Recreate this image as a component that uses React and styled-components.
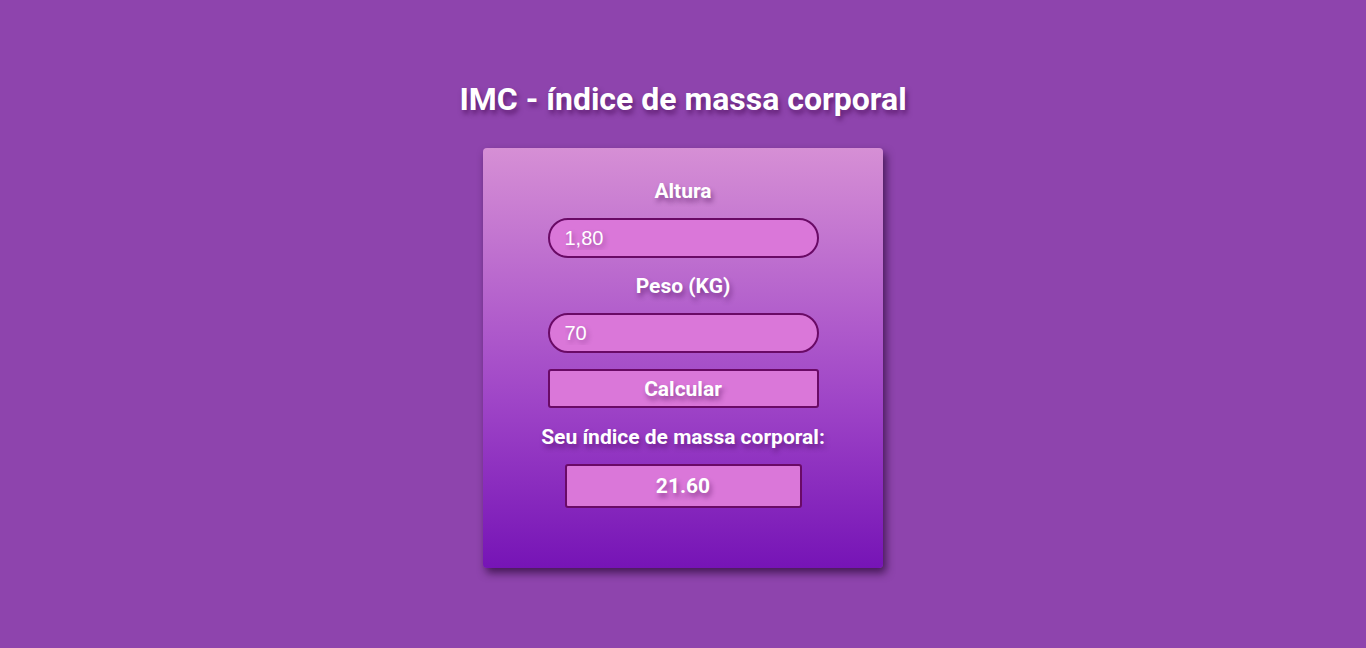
import React, { useState } from 'react';
import styled, { createGlobalStyle } from 'styled-components';

const Global = createGlobalStyle`
    html, body {
        margin: 0;
        padding: 0;
        background: #8e44ad;
        font-family: Roboto, "Liberation Sans", Arial, sans-serif;
    }
`;

export default function App() {
    const [altura, setAltura] = useState('1,80');
    const [peso, setPeso] = useState('70');
    const [imc, setImc] = useState('21.60');

    const calcular = () => {
        const a = parseFloat(altura.replace(',', '.'));
        const p = parseFloat(peso.replace(',', '.'));
        if (a && p) setImc((p / (a * a)).toFixed(2));
    };

    return (
        <Page>
            <Global />
            <Title>IMC - índice de massa corporal</Title>
            <Card>
                <Label>Altura</Label>
                <Input value={altura} onChange={e => setAltura(e.target.value)} />
                <Label>Peso (KG)</Label>
                <Input value={peso} onChange={e => setPeso(e.target.value)} />
                <Button onClick={calcular}>Calcular</Button>
                <Label>Seu índice de massa corporal:</Label>
                <Result>{imc}</Result>
            </Card>
        </Page>
    );
}

const Page = styled.div`
    min-height: 648px;
    display: flex;
    flex-direction: column;
    align-items: center;
    padding-top: 81px;
    box-sizing: border-box;
`;
const Title = styled.h1`
    margin: 0 0 30px;
    font-size: 32px;
    line-height: 37px;
    font-weight: 700;
    color: #fff;
    text-shadow: 2px 4px 5px rgba(60, 0, 70, 0.55);
`;
const Card = styled.div`
    width: 400px;
    height: 420px;
    box-sizing: border-box;
    padding-top: 31px;
    border-radius: 4px;
    background: linear-gradient(to bottom, #d68fd5, #9f45c7 60%, #7614b6);
    box-shadow: 3px 5px 8px rgba(30, 0, 40, 0.65);
    display: flex;
    flex-direction: column;
    align-items: center;
`;
const Label = styled.div`
    font-size: 21px;
    line-height: 24px;
    font-weight: 700;
    color: #fff;
    text-shadow: 2px 4px 5px rgba(60, 0, 70, 0.45);
    margin-bottom: 15px;
`;
const Input = styled.input`
    width: 271px;
    height: 40px;
    box-sizing: border-box;
    border: 2px solid #6a0a66;
    border-radius: 20px;
    background: #da77d9;
    color: #fff;
    font-family: "Liberation Sans", Arial, sans-serif;
    font-size: 20px;
    padding: 0 0 0 15px;
    outline: none;
    text-shadow: 2px 3px 5px rgba(60, 0, 70, 0.35);
    margin-bottom: 16px;
`;
const Button = styled.button`
    width: 271px;
    height: 39px;
    box-sizing: border-box;
    border: 2px solid #6a0a66;
    border-radius: 3px;
    background: #da77d9;
    color: #fff;
    font-family: Roboto, sans-serif;
    font-size: 21px;
    font-weight: 700;
    text-shadow: 2px 4px 5px rgba(60, 0, 70, 0.45);
    cursor: pointer;
    margin-bottom: 17px;
`;
const Result = styled.div`
    width: 237px;
    height: 44px;
    box-sizing: border-box;
    border: 2px solid #6a0a66;
    border-radius: 3px;
    background: #da77d9;
    color: #fff;
    font-size: 21px;
    font-weight: 700;
    display: flex;
    align-items: center;
    justify-content: center;
    text-shadow: 2px 4px 5px rgba(60, 0, 70, 0.45);
`;
